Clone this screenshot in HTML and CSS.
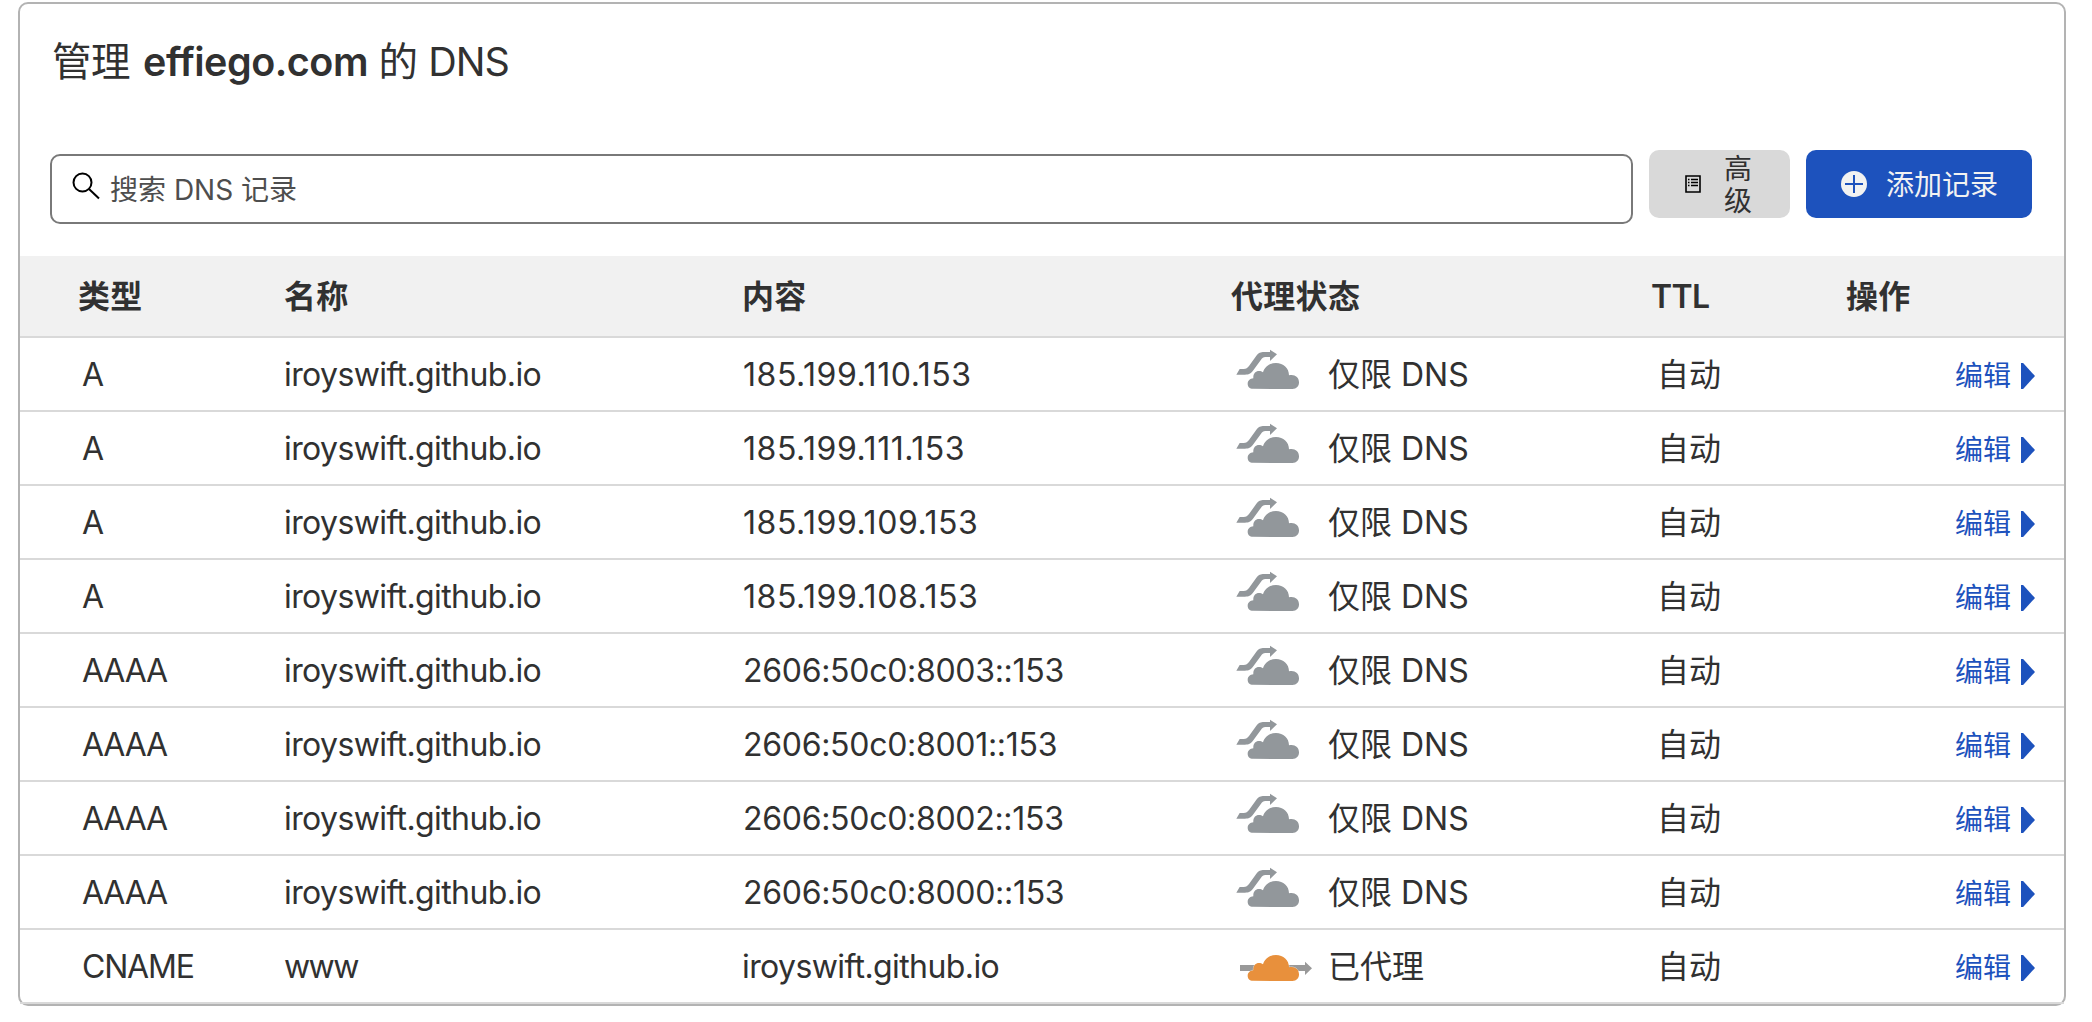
FILE: index.html
```
<!DOCTYPE html>
<html lang="zh-CN">
<head>
<meta charset="utf-8">
<title>DNS</title>
<link rel="stylesheet" href="styles.css">
</head>
<body>
<svg class="defs" width="0" height="0" aria-hidden="true">
  <symbol id="cloud" viewBox="78 48 231 216">
    <path d="M129 200.500C119 200.500 113 194 113 185C113 176 120 170 130 169C129 156 136 147 147 147C152 147 155 148 159 151C164 134 179 123 198 123C220 123 237 138 237 160C254 156 267 166 267 181C267 193 260 201 247 201Z"/>
  </symbol>
  <symbol id="bypass" viewBox="78 48 231 216">
    <path d="M79 158L89 141H101C109 141 112 138 117 132L138 103C146 92 152 90 162 90H180V83L201 97L180 117V105H166C160 105 157 108 153 113L130 145C122 156 116 158 105 158Z"/>
  </symbol>
  <symbol id="through" viewBox="78 48 231 216">
    <path d="M90 153H285V143L306 163L285 183V171H90Z"/>
  </symbol>
</svg>
<main class="card">
  <h1 class="title">管理 <b>effiego.com</b> 的 <span>DNS</span></h1>
  <div class="toolbar">
    <label class="search">
      <svg class="glass" width="28" height="28" viewBox="0 0 28 28"><circle cx="10.500" cy="10.500" r="9"/><path d="M17 17L27 26.500"/></svg>
      <span>搜索 DNS 记录</span>
    </label>
    <button class="btn advanced">
      <svg width="16" height="18" viewBox="0 0 16 18"><path class="line" d="M1 1H15V17H1Z"/><path class="thin" d="M3 4.500H4.500M6 4.500H13M3 7.500H4.500M6 7.500H13M3 10.500H4.500M6 10.500H13"/></svg>
      <span>高级</span>
    </button>
    <button class="btn add">
      <svg width="26" height="26" viewBox="0 0 26 26"><circle cx="13" cy="13" r="13"/><path d="M4 13H22M13 4V22"/></svg>
      <span>添加记录</span>
    </button>
  </div>
  <section class="table">
    <div class="row head"><span>类型</span><span>名称</span><span>内容</span><span>代理状态</span><span class="ttl-head">TTL</span><span>操作</span></div>
    <div class="row"><span class="type">A</span><span class="name">iroyswift.github.io</span><span class="ip">185.199.110.153</span><span class="proxy"><svg class="icon off"><use href="#bypass"/><use href="#cloud"/></svg>仅限 DNS</span><span class="ttl">自动</span><a class="edit">编辑<i></i></a></div>
    <div class="row"><span class="type">A</span><span class="name">iroyswift.github.io</span><span class="ip">185.199.111.153</span><span class="proxy"><svg class="icon off"><use href="#bypass"/><use href="#cloud"/></svg>仅限 DNS</span><span class="ttl">自动</span><a class="edit">编辑<i></i></a></div>
    <div class="row"><span class="type">A</span><span class="name">iroyswift.github.io</span><span class="ip">185.199.109.153</span><span class="proxy"><svg class="icon off"><use href="#bypass"/><use href="#cloud"/></svg>仅限 DNS</span><span class="ttl">自动</span><a class="edit">编辑<i></i></a></div>
    <div class="row"><span class="type">A</span><span class="name">iroyswift.github.io</span><span class="ip">185.199.108.153</span><span class="proxy"><svg class="icon off"><use href="#bypass"/><use href="#cloud"/></svg>仅限 DNS</span><span class="ttl">自动</span><a class="edit">编辑<i></i></a></div>
    <div class="row"><span class="type">AAAA</span><span class="name">iroyswift.github.io</span><span class="ip6">2606:50c0:8003::153</span><span class="proxy"><svg class="icon off"><use href="#bypass"/><use href="#cloud"/></svg>仅限 DNS</span><span class="ttl">自动</span><a class="edit">编辑<i></i></a></div>
    <div class="row"><span class="type">AAAA</span><span class="name">iroyswift.github.io</span><span class="ip6">2606:50c0:8001::153</span><span class="proxy"><svg class="icon off"><use href="#bypass"/><use href="#cloud"/></svg>仅限 DNS</span><span class="ttl">自动</span><a class="edit">编辑<i></i></a></div>
    <div class="row"><span class="type">AAAA</span><span class="name">iroyswift.github.io</span><span class="ip6">2606:50c0:8002::153</span><span class="proxy"><svg class="icon off"><use href="#bypass"/><use href="#cloud"/></svg>仅限 DNS</span><span class="ttl">自动</span><a class="edit">编辑<i></i></a></div>
    <div class="row"><span class="type">AAAA</span><span class="name">iroyswift.github.io</span><span class="ip6">2606:50c0:8000::153</span><span class="proxy"><svg class="icon off"><use href="#bypass"/><use href="#cloud"/></svg>仅限 DNS</span><span class="ttl">自动</span><a class="edit">编辑<i></i></a></div>
    <div class="row"><span class="type">CNAME</span><span class="name short">www</span><span class="name">iroyswift.github.io</span><span class="proxy"><svg class="icon on"><use class="arrow" href="#through"/><use class="halo" href="#cloud"/></svg>已代理</span><span class="ttl">自动</span><a class="edit">编辑<i></i></a></div>
  </section>
</main>
</body>
</html>
```
FILE: styles.css
```
* { box-sizing: border-box; }
body {
  margin: 0;
  background: #fff;
  color: #313131;
  font-family: Inter, "Noto Sans CJK SC", sans-serif;
  font-size: 32px;
}
.defs { position: absolute; }
.card {
  width: 2048px;
  height: 1004px;
  margin: 2px 0 0 18px;
  border: 2px solid #b3b3b3;
  border-radius: 10px;
}
.title {
  height: 146px;
  margin: 0;
  padding: 28px 0 0 32px;
  font-size: 39.500px;
  line-height: 60px;
  font-weight: 400;
  letter-spacing: -0.500px;
  white-space: nowrap;
}
.title b { margin-left: 2.500px; font-weight: 600; }
.title span { letter-spacing: -1px; }
.toolbar {
  display: flex;
  align-items: flex-start;
  height: 106px;
  padding: 0 32px 0 30px;
}
.search {
  display: flex;
  width: 1583px;
  height: 70px;
  margin: 4px 16px 0 0;
  padding: 0 20px;
  border: 2px solid #797979;
  border-radius: 10px;
  color: #4e4e4e;
  font-size: 28px;
  line-height: 68px;
}
.glass {
  margin: 16px 10px 0 0;
  fill: none;
  stroke: #000;
  stroke-width: 2;
}
.btn {
  display: flex;
  align-items: center;
  height: 68px;
  padding: 0;
  border: 0;
  border-radius: 10px;
  font: inherit;
  font-size: 28px;
}
.advanced {
  width: 141px;
  margin-right: 16px;
  padding-left: 36px;
  gap: 23px;
  background: #d9d9d9;
  color: #313131;
}
.advanced span { width: 28px; padding-top: 1px; line-height: 32px; }
.advanced svg { fill: none; stroke: #000; }
.line { stroke-width: 1.600; }
.thin { stroke-width: 1.400; }
.add {
  width: 226px;
  padding-left: 35px;
  gap: 19px;
  background: #1d52bd;
  color: #f2f2f2;
}
.add span { padding-bottom: 2px; }
.add svg { fill: #f2f2f2; }
.add path { stroke: #1d52bd; stroke-width: 2; }
.row {
  display: grid;
  grid-template-columns: 264px 458px 489px 420px 195px 1fr;
  height: 74px;
  border-bottom: 2px solid #d9d9d9;
  line-height: 74px;
  white-space: nowrap;
}
.head {
  height: 82px;
  background: #f1f1f1;
  font-weight: 600;
  line-height: 82px;
  letter-spacing: 0.300px;
}
.head span:first-child { padding-left: 58px; }
.ttl-head { letter-spacing: -0.600px; }
.type { padding-left: 62px; letter-spacing: -1.200px; }
.name { letter-spacing: -0.600px; }
.short { letter-spacing: -1.600px; }
.ip { padding-left: 1px; letter-spacing: 0.550px; }
.ip6 { padding-left: 1px; letter-spacing: -0.300px; }
.proxy { display: flex; padding-left: 5px; }
.icon { flex: none; width: 77px; height: 72px; margin-right: 15px; }
.off { fill: #92979b; }
.on { fill: #e8903c; }
.arrow { fill: #999; }
.halo { stroke: #fff; stroke-width: 2; paint-order: stroke; }
.ttl { padding-left: 6px; }
.edit {
  display: flex;
  padding-left: 109px;
  color: #1d52bd;
  font-size: 28px;
  line-height: 76px;
}
.edit i {
  width: 14px;
  height: 26px;
  margin: 25px 0 0 10px;
  background: #1d52bd;
  clip-path: polygon(0 0, 15% 0, 100% 50%, 15% 100%, 0 100%);
}
```
